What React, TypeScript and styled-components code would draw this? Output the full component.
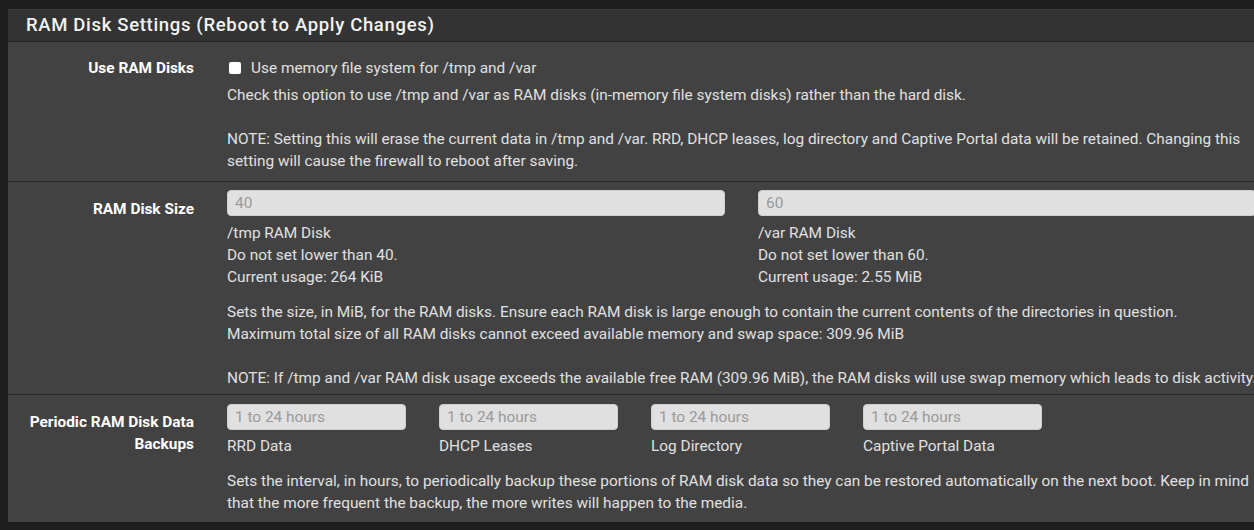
import React from "react";
import styled, { createGlobalStyle } from "styled-components";

const Global = createGlobalStyle`
  html, body { margin: 0; padding: 0; background: #1e1e1e; overflow: hidden; }
  body { font-family: Roboto, "Liberation Sans", Arial, sans-serif; font-size: 15.4px; color: #e0e0e0; }
`;

const Page = styled.div`
  padding: 9px 0 0 8px;
  width: 1300px;
`;

const Panel = styled.section`
  width: 1263px;
  background: #424242;
`;

const Heading = styled.h2`
  margin: 0;
  height: 31px;
  line-height: 31px;
  padding: 0 18px;
  background: #333333;
  border-top: 1px solid #3b3b3b;
  border-bottom: 1px solid #232323;
  color: #f2f2f2;
  font-size: 18.5px;
  font-weight: 500;
  letter-spacing: 0.67px;
`;

const Row = styled.div<{ $last?: boolean; $pt?: number; $pb?: number }>`
  display: flex;
  padding: ${(p) => p.$pt ?? 8}px 0 ${(p) => p.$pb ?? 8}px;
  border-bottom: ${(p) => (p.$last ? "none" : "1px solid #2a2a2a")};
`;

const Label = styled.div<{ $pt?: number }>`
  flex: 0 0 186px;
  box-sizing: border-box;
  padding: ${(p) => p.$pt ?? 8}px 0 0 15px;
  text-align: right;
  font-weight: 700;
  color: #ffffff;
  line-height: 22px;
`;

const Content = styled.div`
  flex: 1;
  padding-left: 33px;
  padding-right: 7px;
  line-height: 22px;
`;

const CheckLine = styled.label`
  display: flex;
  align-items: center;
  gap: 10px;
  padding-top: 7px;
  padding-left: 2px;
`;

const Check = styled.span`
  width: 12px;
  height: 12px;
  background: #fff;
  border-radius: 2px;
  display: inline-block;
`;

const Help = styled.div<{ $mt?: number }>`
  margin-top: ${(p) => p.$mt ?? 5}px;
`;

const Blank = styled.div`
  height: 22px;
`;

const Cols = styled.div<{ $colw: number }>`
  display: grid;
  grid-template-columns: repeat(auto-fill, ${(p) => p.$colw}px);
  column-gap: 33px;
`;

const Field = styled.div``;

const Input = styled.input`
  display: block;
  box-sizing: border-box;
  width: 100%;
  height: 26px;
  border: 1px solid #cfcfcf;
  border-radius: 4px;
  background: #e0e0e0;
  padding: 0 7px;
  font-family: inherit;
  font-size: 15.4px;
  color: #555;
  outline: none;
  &::placeholder { color: #9a9a9a; }
`;

const Sub = styled.div<{ $mt?: number }>`
  margin-top: ${(p) => p.$mt ?? 6}px;
`;

export default function App() {
  return (
    <>
      <Global />
      <Page>
        <Panel>
          <Heading>RAM Disk Settings (Reboot to Apply Changes)</Heading>

          <Row $pb={9}>
            <Label $pt={7}>Use RAM Disks</Label>
            <Content>
              <CheckLine>
                <Check />
                <span>Use memory file system for /tmp and /var</span>
              </CheckLine>
              <Help>
                Check this option to use /tmp and /var as RAM disks (in-memory file system disks) rather than the hard disk.
                <Blank />
                NOTE: Setting this will erase the current data in /tmp and /var. RRD, DHCP leases, log directory and Captive Portal data will be retained. Changing this setting will cause the firewall to reboot after saving.
              </Help>
            </Content>
          </Row>

          <Row $pb={5}>
            <Label>RAM Disk Size</Label>
            <Content>
              <Cols $colw={498}>
                <Field>
                  <Input placeholder="40" disabled />
                  <Sub>
                    /tmp RAM Disk
                    <br />
                    Do not set lower than 40.
                    <br />
                    Current usage: 264 KiB
                  </Sub>
                </Field>
                <Field>
                  <Input placeholder="60" disabled />
                  <Sub>
                    /var RAM Disk
                    <br />
                    Do not set lower than 60.
                    <br />
                    Current usage: 2.55 MiB
                  </Sub>
                </Field>
              </Cols>
              <Help $mt={13}>
                Sets the size, in MiB, for the RAM disks. Ensure each RAM disk is large enough to contain the current contents of the directories in question.
                <br />
                Maximum total size of all RAM disks cannot exceed available memory and swap space: 309.96 MiB
                <Blank />
                <span style={{ whiteSpace: "nowrap" }}>
                  NOTE: If /tmp and /var RAM disk usage exceeds the available free RAM (309.96 MiB), the RAM disks will use swap memory which leads to disk activity.
                </span>
              </Help>
            </Content>
          </Row>

          <Row $last $pt={9} $pb={8}>
            <Label $pt={7}>Periodic RAM Disk Data Backups</Label>
            <Content>
              <Cols $colw={179}>
                {["RRD Data", "DHCP Leases", "Log Directory", "Captive Portal Data"].map((t) => (
                  <Field key={t}>
                    <Input placeholder="1 to 24 hours" disabled />
                    <Sub $mt={5}>{t}</Sub>
                  </Field>
                ))}
              </Cols>
              <Help $mt={13}>
                Sets the interval, in hours, to periodically backup these portions of RAM disk data so they can be restored automatically on the next boot. Keep in mind that the more frequent the backup, the more writes will happen to the media.
              </Help>
            </Content>
          </Row>
        </Panel>
      </Page>
    </>
  );
}
